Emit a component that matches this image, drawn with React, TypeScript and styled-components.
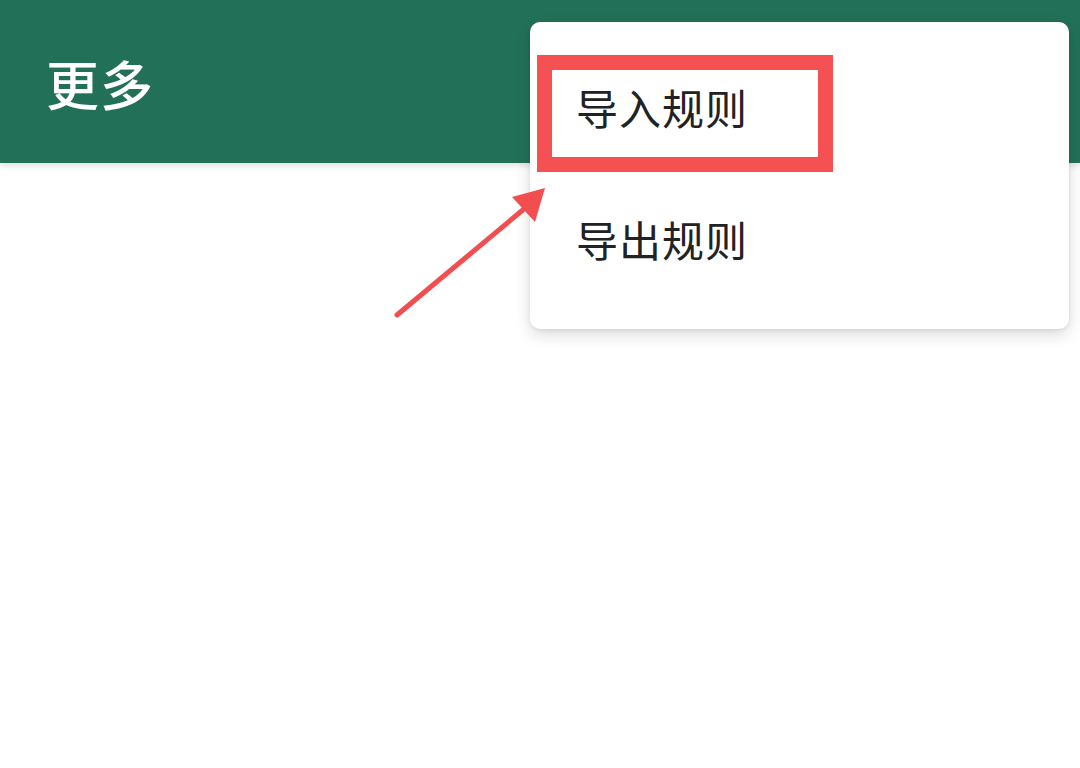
import styled, { createGlobalStyle } from "styled-components";

const GlobalStyle = createGlobalStyle`
  html, body {
    margin: 0;
    padding: 0;
    background: #ffffff;
    font-family: "Noto Sans CJK SC", "Noto Sans", sans-serif;
  }
`;

const menuItems = ["导入规则", "导出规则"];

const App = () => {
  return (
    <>
      <GlobalStyle />
      <Page>
        <AppBar>
          <Title>更多</Title>
        </AppBar>

        <Menu>
          {menuItems.map((label, i) => (
            <MenuItem key={label}>
              {label}
              {i === 0 && <Highlight />}
            </MenuItem>
          ))}
        </Menu>

        <Arrow viewBox="0 0 160 140" width="160" height="140">
          <line x1="7" y1="135" x2="134" y2="29" stroke="#f24d4f" strokeWidth="5" strokeLinecap="round" />
          <polygon points="155,8 122,17 145,42" fill="#f24d4f" />
        </Arrow>
      </Page>
    </>
  );
};
export default App;

const Page = styled.div`
  position: relative;
  width: 1080px;
  height: 768px;
  overflow: hidden;
  background: #ffffff;
`;

const AppBar = styled.header`
  display: flex;
  align-items: center;
  height: 163px;
  padding: 0 46px;
  box-sizing: border-box;
  background: #237058;
  box-shadow: 0 3px 6px rgba(0, 0, 0, 0.12);
`;

const Title = styled.h1`
  margin: 4px 0 0;
  color: #ffffff;
  font-size: 53px;
  font-weight: 500;
  letter-spacing: 1px;
  line-height: 1;
`;

const Menu = styled.ul`
  position: absolute;
  top: 22px;
  left: 530px;
  width: 539px;
  margin: 0;
  padding: 18px 0 25px;
  box-sizing: border-box;
  list-style: none;
  background: #ffffff;
  border-radius: 10px;
  box-shadow: 0 6px 16px rgba(0, 0, 0, 0.14), 0 1px 4px rgba(0, 0, 0, 0.08);
`;

const MenuItem = styled.li`
  position: relative;
  display: flex;
  align-items: center;
  height: 132px;
  padding-left: 46px;
  color: #222222;
  font-size: 42px;
  font-weight: 400;
  letter-spacing: 1px;
`;

const Highlight = styled.span`
  position: absolute;
  left: 7px;
  top: 15px;
  width: 296px;
  height: 117px;
  box-sizing: border-box;
  border: 15px solid #f55052;
`;

const Arrow = styled.svg`
  position: absolute;
  left: 390px;
  top: 180px;
  overflow: visible;
`;
